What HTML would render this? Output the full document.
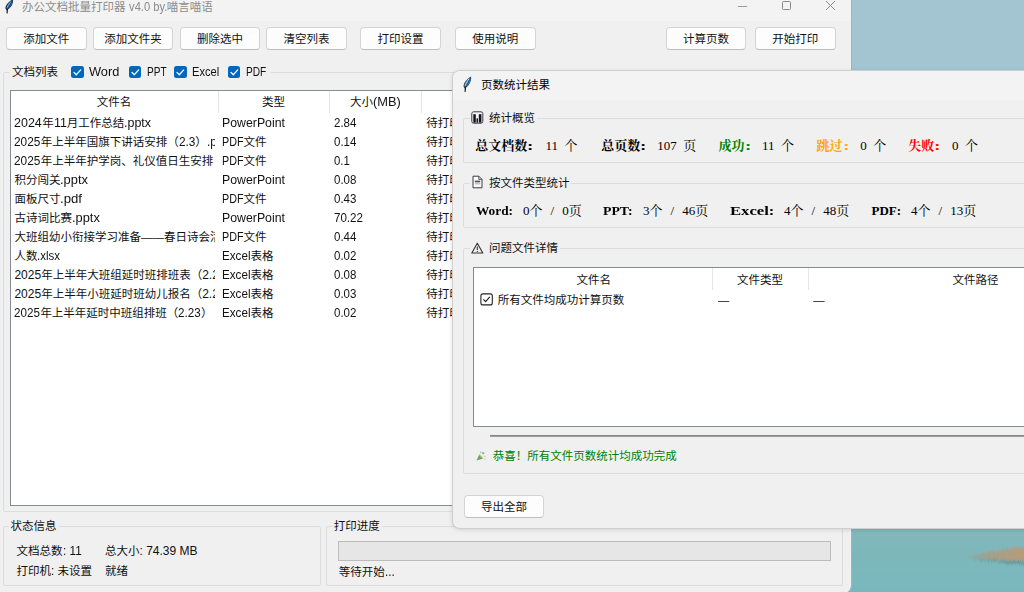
<!DOCTYPE html>
<html lang="zh-CN">
<head>
<meta charset="utf-8">
<title>办公文档批量打印器</title>
<style>
*{box-sizing:border-box;margin:0;padding:0}
html,body{width:1024px;height:592px;overflow:hidden}
body{position:relative;font-family:"Liberation Sans","Noto Sans CJK SC",sans-serif;font-size:11.5px;color:#111;background:#a3c5d2}
.l{font-size:12px;line-height:0}
.sl{font-size:13px;line-height:0}
.f{display:inline-block;transform-origin:0 50%;white-space:pre;line-height:inherit}
.abs{position:absolute}
.t{position:absolute;white-space:nowrap;line-height:16px;height:16px}
#main{left:0;top:0;width:852px;height:593px;background:#f0f0f0;border-right:1px solid #9bb6c0;border-bottom-right-radius:8px}
#main .title{left:0;top:0;width:851px;height:21px;background:#f3f3f3}
.btn{position:absolute;height:22.5px;top:27.25px;width:80.5px;background:#fdfdfd;border:1px solid #d4d4d4;border-bottom-color:#bdbdbd;border-radius:4px;text-align:center;line-height:22.5px;color:#111}
.grp{position:absolute;border:1px solid #dcdcdc;border-radius:2px}
.glabel{position:absolute;background:#f0f0f0;white-space:nowrap;line-height:16px;height:16px}
.cb{position:absolute;width:12.5px;height:12.5px;background:#0067c0;border-radius:2.5px}
.cb svg{position:absolute;left:0;top:0;width:12.5px;height:12.5px}
.list{position:absolute;background:#fff;border:1px solid #868b93}
.row{position:absolute;left:0;height:19px;line-height:19px;white-space:nowrap}
.cell{position:absolute;top:0;height:19px;line-height:19px;overflow:hidden;white-space:nowrap}
.hsep{position:absolute;top:0;width:1px;height:22px;background:#e5e5e5}
#dlg{left:452.2px;top:70.1px;width:600px;height:459px;background:#f0f0f0;border:1px solid #cfcfcf;border-radius:8px;box-shadow:0 1px 4px rgba(0,0,0,.13)}
.serif{font-family:"Liberation Serif","Noto Serif CJK SC",serif;font-size:13px;color:#000;word-spacing:3.25px}
.b{font-weight:bold}
.ic{position:absolute;overflow:visible}
</style>
</head>
<body>
<div class="abs" style="left:851px;top:0;width:173px;height:72px;background:#a3c5d2"></div>
<svg class="abs" style="left:840px;top:520px;width:184px;height:72px" viewBox="0 0 184 72">
  <defs>
    <linearGradient id="wg" x1="0" y1="0" x2="0" y2="1"><stop offset="0" stop-color="#86b8bb"/><stop offset=".35" stop-color="#7fb7bb"/><stop offset="1" stop-color="#78b8bd"/></linearGradient>
    <linearGradient id="sg" x1="124" y1="0" x2="190" y2="0" gradientUnits="userSpaceOnUse"><stop offset="0" stop-color="#a39d8c" stop-opacity=".25"/><stop offset=".35" stop-color="#ad9a80" stop-opacity=".8"/><stop offset="1" stop-color="#bb9b76" stop-opacity="1"/></linearGradient>
    <linearGradient id="dg" x1="124" y1="0" x2="190" y2="0" gradientUnits="userSpaceOnUse"><stop offset="0" stop-color="#5f8f92" stop-opacity=".2"/><stop offset="1" stop-color="#5d8a8c" stop-opacity=".9"/></linearGradient>
    <filter id="bl" x="-20%" y="-60%" width="140%" height="220%">
      <feTurbulence type="fractalNoise" baseFrequency="0.9 0.08" numOctaves="2" seed="4" result="n"/>
      <feDisplacementMap in="SourceGraphic" in2="n" scale="4" xChannelSelector="R" yChannelSelector="G" result="d"/>
      <feGaussianBlur in="d" stdDeviation="0.7 0.9"/>
    </filter>
  </defs>
  <rect width="184" height="72" fill="url(#wg)"/>
  <g filter="url(#bl)">
    <path d="M128 37.6 C145 38.4 165 40.4 200 42.5 L200 45.5 C165 44 145 41.5 128 38.6Z" fill="url(#dg)"/>
    <path d="M124 36.8 C138 34 152 31.5 166 29.3 C175 28 190 26.5 200 26 L200 41.8 C170 40.6 145 38.8 124 37.6Z" fill="url(#sg)"/>
  </g>
</svg>

<div class="abs" id="main">
  <div class="abs title"></div>
  <svg class="ic" style="left:4.5px;top:-1px;width:9px;height:15px" viewBox="0 0 9 15"><path d="M8 .2 C4.4 2 .4 5.8 .4 9.6 L1.8 11.6 L2.5 10.8 C6 8.6 8.6 4.6 8 .2Z" fill="#1d2a36"/><path d="M7.6 1 C5 2.8 1.8 6 1.5 9.6 L2.2 10.3 C5.4 8 7.8 4.6 7.6 1Z" fill="#2d7fdc"/><path d="M6 2.6 C4.2 4.2 2.6 6.4 2.1 8.8" fill="none" stroke="#b5d3ee" stroke-width=".9" stroke-dasharray="1 1"/><path d="M7.4 1.4 C6 4.6 4.4 7.6 2.6 10.2" fill="none" stroke="#14202b" stroke-width=".7"/><path d="M2.4 10.2 L2.1 13.9" stroke="#16191d" stroke-width="1.2" stroke-linecap="round"/></svg>
  <div class="t" style="left:22px;top:-1.5px;color:#8c8c8c">办公文档批量打印器<span class="l f" id="f0" style="transform:scaleX(0.929);margin-right:-3.17px"> v4.0 by.</span>喵言喵语</div>
  <svg class="ic" style="left:731px;top:0px;width:120px;height:14px" viewBox="0 0 120 14"><path d="M7 6.5 H16" stroke="#9a9a9a" stroke-width="1"/><rect x="51.5" y="1.5" width="8" height="8" rx="1" fill="none" stroke="#8a8a8a" stroke-width="1"/><path d="M95 1 L104 10 M104 1 L95 10" stroke="#8a8a8a" stroke-width="1"/></svg>
  <div class="btn" style="left:6.0px">添加文件</div>
  <div class="btn" style="left:92.75px">添加文件夹</div>
  <div class="btn" style="left:179.75px">删除选中</div>
  <div class="btn" style="left:266.25px">清空列表</div>
  <div class="btn" style="left:360.25px">打印设置</div>
  <div class="btn" style="left:455.0px">使用说明</div>
  <div class="btn" style="left:665.75px">计算页数</div>
  <div class="btn" style="left:755.0px">开始打印</div>
  <div class="grp" style="left:2.75px;top:72px;width:844px;height:440px"></div>
  <div class="glabel" style="left:10px;top:64px;width:260.5px"></div>
  <div class="t" style="left:12px;top:64px">文档列表</div>
  <div class="cb" style="left:71.4px;top:65.6px"><svg viewBox="0 0 12.5 12.5"><path d="M3 6.4 L5.3 8.7 L9.7 3.9" fill="none" stroke="#fff" stroke-width="1.3" stroke-linecap="round" stroke-linejoin="round"/></svg></div><div class="t" style="left:89px;top:64px"><span class="l f" id="f1" style="transform:scaleX(1.065);margin-right:1.85px">Word</span></div>
  <div class="cb" style="left:128.6px;top:65.6px"><svg viewBox="0 0 12.5 12.5"><path d="M3 6.4 L5.3 8.7 L9.7 3.9" fill="none" stroke="#fff" stroke-width="1.3" stroke-linecap="round" stroke-linejoin="round"/></svg></div><div class="t" style="left:146.5px;top:64px"><span class="l f" id="f2" style="transform:scaleX(0.840);margin-right:-3.74px">PPT</span></div>
  <div class="cb" style="left:174.3px;top:65.6px"><svg viewBox="0 0 12.5 12.5"><path d="M3 6.4 L5.3 8.7 L9.7 3.9" fill="none" stroke="#fff" stroke-width="1.3" stroke-linecap="round" stroke-linejoin="round"/></svg></div><div class="t" style="left:192.2px;top:64px"><span class="l f" id="f3" style="transform:scaleX(0.930);margin-right:-2.04px">Excel</span></div>
  <div class="cb" style="left:227.8px;top:65.6px"><svg viewBox="0 0 12.5 12.5"><path d="M3 6.4 L5.3 8.7 L9.7 3.9" fill="none" stroke="#fff" stroke-width="1.3" stroke-linecap="round" stroke-linejoin="round"/></svg></div><div class="t" style="left:246.2px;top:64px"><span class="l f" id="f4" style="transform:scaleX(0.846);margin-right:-3.70px">PDF</span></div>
  <div class="list" style="left:9.5px;top:89.5px;width:831px;height:416.5px">
    <div class="hsep" style="left:207px"></div><div class="hsep" style="left:318.5px"></div><div class="hsep" style="left:410.5px"></div>
    <div class="cell" style="left:0;width:207px;text-align:center;top:2.5px">文件名</div>
    <div class="cell" style="left:208px;width:110px;text-align:center;top:2.5px">类型</div>
    <div class="cell" style="left:319px;width:92px;text-align:center;top:2.5px">大小<span class="l f" id="f5" style="transform:scaleX(1.069);margin-right:1.80px">(MB)</span></div>
    <div class="row" style="top:23px"><div class="cell" style="left:3.95px;width:200.4px"><span class="l f" id="f6" style="transform:scaleX(1.040);margin-right:1.07px">2024</span>年<span class="l f" id="f7" style="transform:scaleX(1.040);margin-right:0.50px">11</span>月工作总结<span class="l f" id="f8" style="transform:scaleX(1.040);margin-right:1.04px">.pptx</span></div><div class="cell" style="left:211.5px;width:105px"><span class="l f" id="f9" style="transform:scaleX(1.026);margin-right:1.63px">PowerPoint</span></div><div class="cell" style="left:323.5px;width:85px"><span class="l f" id="f10" style="transform:scaleX(0.959);margin-right:-0.96px">2.84</span></div><div class="cell" style="left:415.7px;width:60px">待打印</div></div>
    <div class="row" style="top:42px"><div class="cell" style="left:3.95px;width:200.4px"><span class="l f" id="f11" style="transform:scaleX(0.986);margin-right:-0.38px">2025</span>年上半年国旗下讲话安排（<span class="l f" id="f12" style="transform:scaleX(0.986);margin-right:-0.24px">2.3</span>）<span class="l f" id="f13" style="transform:scaleX(0.986);margin-right:-0.29px">.pdf</span></div><div class="cell" style="left:211.5px;width:105px"><span class="l f" id="f14" style="transform:scaleX(0.896);margin-right:-2.50px">PDF</span>文件</div><div class="cell" style="left:323.5px;width:85px"><span class="l f" id="f15" style="transform:scaleX(0.959);margin-right:-0.96px">0.14</span></div><div class="cell" style="left:415.7px;width:60px">待打印</div></div>
    <div class="row" style="top:61px"><div class="cell" style="left:3.95px;width:200.4px"><span class="l f" id="f16" style="transform:scaleX(0.986);margin-right:-0.38px">2025</span>年上半年护学岗、礼仪值日生安排（<span class="l f" id="f17" style="transform:scaleX(0.986);margin-right:-0.24px">2.3</span>）<span class="l f" id="f18" style="transform:scaleX(0.986);margin-right:-0.29px">.pdf</span></div><div class="cell" style="left:211.5px;width:105px"><span class="l f" id="f19" style="transform:scaleX(0.896);margin-right:-2.50px">PDF</span>文件</div><div class="cell" style="left:323.5px;width:85px"><span class="l f" id="f20" style="transform:scaleX(0.950);margin-right:-0.84px">0.1</span></div><div class="cell" style="left:415.7px;width:60px">待打印</div></div>
    <div class="row" style="top:80px"><div class="cell" style="left:3.95px;width:200.4px">积分闯关<span class="l f" id="f21" style="transform:scaleX(1.076);margin-right:1.98px">.pptx</span></div><div class="cell" style="left:211.5px;width:105px"><span class="l f" id="f22" style="transform:scaleX(1.026);margin-right:1.63px">PowerPoint</span></div><div class="cell" style="left:323.5px;width:85px"><span class="l f" id="f23" style="transform:scaleX(0.959);margin-right:-0.96px">0.08</span></div><div class="cell" style="left:415.7px;width:60px">待打印</div></div>
    <div class="row" style="top:99px"><div class="cell" style="left:3.95px;width:200.4px">面板尺寸<span class="l f" id="f24" style="transform:scaleX(1.099);margin-right:1.98px">.pdf</span></div><div class="cell" style="left:211.5px;width:105px"><span class="l f" id="f25" style="transform:scaleX(0.896);margin-right:-2.50px">PDF</span>文件</div><div class="cell" style="left:323.5px;width:85px"><span class="l f" id="f26" style="transform:scaleX(0.959);margin-right:-0.96px">0.43</span></div><div class="cell" style="left:415.7px;width:60px">待打印</div></div>
    <div class="row" style="top:118px"><div class="cell" style="left:3.95px;width:200.4px">古诗词比赛<span class="l f" id="f27" style="transform:scaleX(1.069);margin-right:1.78px">.pptx</span></div><div class="cell" style="left:211.5px;width:105px"><span class="l f" id="f28" style="transform:scaleX(1.026);margin-right:1.63px">PowerPoint</span></div><div class="cell" style="left:323.5px;width:85px"><span class="l f" id="f29" style="transform:scaleX(0.964);margin-right:-1.08px">70.22</span></div><div class="cell" style="left:415.7px;width:60px">待打印</div></div>
    <div class="row" style="top:137px"><div class="cell" style="left:3.95px;width:200.4px">大班组幼小衔接学习准备——春日诗会活动<span class="l f" id="f30" style="transform:scaleX(1.022);margin-right:0.43px">.pdf</span></div><div class="cell" style="left:211.5px;width:105px"><span class="l f" id="f31" style="transform:scaleX(0.896);margin-right:-2.50px">PDF</span>文件</div><div class="cell" style="left:323.5px;width:85px"><span class="l f" id="f32" style="transform:scaleX(0.959);margin-right:-0.96px">0.44</span></div><div class="cell" style="left:415.7px;width:60px">待打印</div></div>
    <div class="row" style="top:156px"><div class="cell" style="left:3.95px;width:200.4px">人数<span class="l f" id="f33" style="transform:scaleX(0.958);margin-right:-1.00px">.xlsx</span></div><div class="cell" style="left:211.5px;width:105px"><span class="l f" id="f34" style="transform:scaleX(0.971);margin-right:-0.84px">Excel</span>表格</div><div class="cell" style="left:323.5px;width:85px"><span class="l f" id="f35" style="transform:scaleX(0.959);margin-right:-0.96px">0.02</span></div><div class="cell" style="left:415.7px;width:60px">待打印</div></div>
    <div class="row" style="top:175px"><div class="cell" style="left:3.95px;width:200.4px"><span class="l f" id="f36">2025</span>年上半年大班组延时班排班表（<span class="l f" id="f37">2.23</span>）<span class="l f" id="f38">.xlsx</span></div><div class="cell" style="left:211.5px;width:105px"><span class="l f" id="f39" style="transform:scaleX(0.971);margin-right:-0.84px">Excel</span>表格</div><div class="cell" style="left:323.5px;width:85px"><span class="l f" id="f40" style="transform:scaleX(0.959);margin-right:-0.96px">0.08</span></div><div class="cell" style="left:415.7px;width:60px">待打印</div></div>
    <div class="row" style="top:194px"><div class="cell" style="left:3.95px;width:200.4px"><span class="l f" id="f41">2025</span>年上半年小班延时班幼儿报名（<span class="l f" id="f42">2.23</span>）<span class="l f" id="f43">.xlsx</span></div><div class="cell" style="left:211.5px;width:105px"><span class="l f" id="f44" style="transform:scaleX(0.971);margin-right:-0.84px">Excel</span>表格</div><div class="cell" style="left:323.5px;width:85px"><span class="l f" id="f45" style="transform:scaleX(0.959);margin-right:-0.96px">0.03</span></div><div class="cell" style="left:415.7px;width:60px">待打印</div></div>
    <div class="row" style="top:213px"><div class="cell" style="left:3.95px;width:200.4px"><span class="l f" id="f46" style="transform:scaleX(0.971);margin-right:-0.78px">2025</span>年上半年延时中班组排班（<span class="l f" id="f47" style="transform:scaleX(0.971);margin-right:-0.68px">2.23</span>）</div><div class="cell" style="left:211.5px;width:105px"><span class="l f" id="f48" style="transform:scaleX(0.971);margin-right:-0.84px">Excel</span>表格</div><div class="cell" style="left:323.5px;width:85px"><span class="l f" id="f49" style="transform:scaleX(0.959);margin-right:-0.96px">0.02</span></div><div class="cell" style="left:415.7px;width:60px">待打印</div></div>
  </div>
  <div class="grp" style="left:2.75px;top:526px;width:318.5px;height:59.5px"></div>
  <div class="glabel" style="left:8.5px;top:517.5px;padding:0 2px">状态信息</div>
  <div class="t" style="left:16.5px;top:542.5px">文档总数<span class="l f" id="f50" style="transform:scaleX(0.978);margin-right:-0.42px">: 11</span></div>
  <div class="t" style="left:105px;top:542.5px">总大小<span class="l f" id="f51">: 74.39 MB</span></div>
  <div class="t" style="left:16.5px;top:562.5px">打印机<span class="l f" id="f52" style="transform:scaleX(0.974);margin-right:-0.17px">: </span>未设置</div>
  <div class="t" style="left:105px;top:562.5px">就绪</div>
  <div class="grp" style="left:326px;top:526px;width:516.5px;height:59.5px"></div>
  <div class="glabel" style="left:331.75px;top:517.5px;padding:0 2px">打印进度</div>
  <div class="abs" style="left:337.5px;top:540.5px;width:493px;height:20.5px;background:#e6e6e6;border:1px solid #bcbcbc"></div>
  <div class="t" style="left:338.75px;top:563.5px">等待开始<span class="l f" id="f53" style="transform:scaleX(0.978);margin-right:-0.22px">...</span></div>
</div>
<div class="abs" id="dlg">
  <div class="abs" style="left:0;top:0;width:600px;height:28.9px;background:#f3f3f3;border-top-left-radius:7px"></div>
  <svg class="ic" style="left:10.1px;top:4.9px;width:9px;height:16px" viewBox="0 0 9 16"><path d="M8.1 .4 C4.6 2.2 .5 6.4 .5 10.6 L1.9 12.7 L2.6 11.8 C6.2 9.4 8.7 5 8.1 .4Z" fill="#33434d"/><path d="M7.7 1.3 C5.1 3.2 1.9 6.7 1.6 10.6 L2.3 11.3 C5.6 8.8 7.9 5.1 7.7 1.3Z" fill="#3d96ea"/><path d="M6 3 C4.2 4.8 2.7 7.2 2.2 9.8" fill="none" stroke="#c4def2" stroke-width="1.1" stroke-dasharray="1.2 .9"/><path d="M7.5 1.7 C6.1 5.1 4.5 8.4 2.7 11.2" fill="none" stroke="#1b2933" stroke-width=".7"/><path d="M2.5 11.2 L2.1 15.4" stroke="#16191d" stroke-width="1.2" stroke-linecap="round"/></svg>
  <div class="t" style="left:27.8px;top:6.3px;color:#000">页数统计结果</div>
  <div class="grp" style="left:9.55px;top:46.9px;width:600px;height:45.5px"></div>
  <div class="glabel" style="left:16.8px;top:38.9px;width:67px"></div>
  <svg class="ic" style="left:18.1px;top:40.0px;width:13px;height:13px" viewBox="0 0 13 13"><rect x=".8" y=".8" width="11" height="11.4" rx="1.8" fill="#f4f4f4" stroke="#3a3a46" stroke-width="1"/><rect x="2.3" y="3.2" width="2.5" height="8.4" fill="#14141e"/><rect x="5.5" y="7.4" width="1.5" height="4.2" fill="#14141e"/><rect x="7.8" y="3.2" width="2.6" height="8.4" fill="#14141e"/></svg>
  <div class="t" style="left:35.8px;top:38.65px">统计概览</div>
  <div class="t serif b" style="left:22.1px;top:66.5px">总文档数<span class="sl f" id="f54" style="transform:scaleX(1.496);margin-right:2.16px">:</span></div>
  <div class="t serif" style="left:92.3px;top:66.5px">11 个</div>
  <div class="t serif b" style="left:148.1px;top:66.5px">总页数<span class="sl f" id="f55" style="transform:scaleX(1.496);margin-right:2.16px">:</span></div>
  <div class="t serif" style="left:204.1px;top:66.5px">107 页</div>
  <div class="t serif b" style="left:265.4px;top:66.5px;color:#008000">成功<span class="sl f" id="f56" style="transform:scaleX(1.496);margin-right:2.16px">:</span></div>
  <div class="t serif" style="left:308.8px;top:66.5px">11 个</div>
  <div class="t serif b" style="left:363.4px;top:66.5px;color:#ffa500">跳过<span class="sl f" id="f57" style="transform:scaleX(1.496);margin-right:2.16px">:</span></div>
  <div class="t serif" style="left:407.1px;top:66.5px">0 个</div>
  <div class="t serif b" style="left:455.1px;top:66.5px;color:#ff0000">失败<span class="sl f" id="f58" style="transform:scaleX(1.496);margin-right:2.16px">:</span></div>
  <div class="t serif" style="left:498.8px;top:66.5px">0 个</div>
  <div class="grp" style="left:9.55px;top:111.9px;width:600px;height:45.5px"></div>
  <div class="glabel" style="left:16.8px;top:103.9px;width:101px"></div>
  <svg class="ic" style="left:18.9px;top:104.3px;width:11px;height:14px" viewBox="0 0 11 14"><path d="M1 1.2 H6.8 L10 4.4 V12.8 H1Z" fill="#fafafa" stroke="#3a3a46" stroke-width="1" stroke-linejoin="round"/><path d="M6.8 1.2 V4.4 H10" fill="none" stroke="#3a3a46" stroke-width=".8"/><rect x="2.8" y="5.6" width="5.4" height="1.8" fill="#555"/><rect x="2.8" y="8.4" width="5.4" height=".9" fill="#aaa"/></svg>
  <div class="t" style="left:35.8px;top:103.65px">按文件类型统计</div>
  <div class="t serif b" style="left:22.8px;top:131.5px"><span class="sl f" id="f59" style="transform:scaleX(1.024);margin-right:0.87px">Word:</span></div>
  <div class="t serif" style="left:69.8px;top:131.5px">0个 <span style="padding:0 1.5px">/</span> 0页</div>
  <div class="t serif b" style="left:150.3px;top:131.5px"><span class="sl f" id="f60" style="transform:scaleX(1.060);margin-right:1.68px">PPT:</span></div>
  <div class="t serif" style="left:189.8px;top:131.5px">3个 <span style="padding:0 1.5px">/</span> 46页</div>
  <div class="t serif b" style="left:276.8px;top:131.5px"><span class="sl f" id="f61" style="transform:scaleX(1.281);margin-right:9.74px">Excel:</span></div>
  <div class="t serif" style="left:330.8px;top:131.5px">4个 <span style="padding:0 1.5px">/</span> 48页</div>
  <div class="t serif b" style="left:418.3px;top:131.5px"><span class="sl f" id="f62">PDF:</span></div>
  <div class="t serif" style="left:457.8px;top:131.5px">4个 <span style="padding:0 1.5px">/</span> 13页</div>
  <div class="grp" style="left:9.55px;top:177.15px;width:600px;height:225.3px"></div>
  <div class="glabel" style="left:16.8px;top:168.9px;width:90px"></div>
  <svg class="ic" style="left:18.3px;top:170.9px;width:13px;height:12px" viewBox="0 0 13 12"><path d="M6.3 1.3 L11.8 11 H0.8Z" fill="none" stroke="#333" stroke-width="1.1" stroke-linejoin="round"/><path d="M6.3 4.5 V8" stroke="#333" stroke-width="1.1"/><circle cx="6.3" cy="9.4" r=".6" fill="#333"/></svg>
  <div class="t" style="left:35.8px;top:168.65px">问题文件详情</div>
  <div class="list" style="left:20.3px;top:195.65px;width:600px;height:160.5px">
    <div class="hsep" style="left:237.75px"></div><div class="hsep" style="left:333.5px"></div>
    <div class="cell" style="left:.75px;width:237px;text-align:center;top:3px">文件名</div>
    <div class="cell" style="left:238px;width:95px;text-align:center;top:3px">文件类型</div>
    <div class="cell" style="left:334px;width:334px;text-align:center;top:3px">文件路径</div>
    <svg class="ic" style="left:5.5px;top:25.5px;width:13px;height:13px" viewBox="0 0 13 13"><rect x=".9" y=".9" width="11.4" height="11" rx="2" fill="#fff" stroke="#222" stroke-width="1.1"/><path d="M3.4 6.3 L5.6 8.6 L9.8 3.9" fill="none" stroke="#222" stroke-width="1.2"/></svg>
    <div class="row" style="top:23.5px"><div class="cell" style="left:23.3px;width:200px">所有文件均成功计算页数</div><div class="cell" style="left:243.2px;width:60px">—</div><div class="cell" style="left:338.6px;width:60px">—</div></div>
  </div>
  <div class="abs" style="left:36.8px;top:363.5px;width:600px;height:2px;background:linear-gradient(#7d7d7d,#a8a8a8)"></div>
  <svg class="ic" style="left:23.3px;top:380.4px;width:11px;height:10px" viewBox="0 0 11 10"><path d="M.6 9.4 L3.2 3.4 L7 7.4Z" fill="#63a663"/><path d="M3.2 3.4 L7 7.4" stroke="#d8c268" stroke-width="1.1"/><circle cx="7.2" cy="2.2" r="1.1" fill="#74ace0"/><circle cx="9" cy="5.4" r=".9" fill="#e8d374"/><circle cx="4.8" cy="1.4" r=".8" fill="#9ccf9e"/><circle cx="8.8" cy="8" r=".6" fill="#7fb2e0"/></svg>
  <div class="t" style="left:39.5px;top:376.9px;color:#008000">恭喜！所有文件页数统计均成功完成</div>
  <div class="btn" style="left:10.55px;top:424.4px;width:80.5px">导出全部</div>
</div>
</body>
</html>
